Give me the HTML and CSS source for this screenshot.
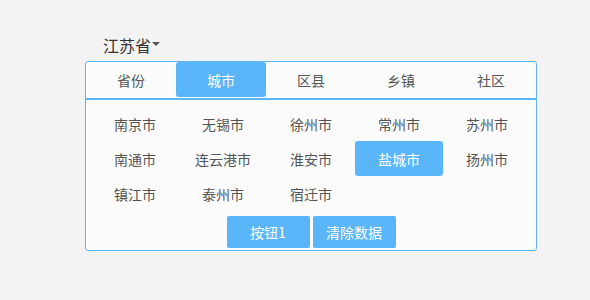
FILE: index.html
```html
<!DOCTYPE html>
<html lang="zh-CN">
<head>
<meta charset="utf-8">
<title>地区选择</title>
<link rel="stylesheet" href="styles.css">
</head>
<body>
<div class="wrap">
  <div class="picker-head"><span class="picker-label">江苏省</span><span class="caret"></span></div>
  <div class="panel">
    <div class="tabs">
      <div class="tab">省份</div>
      <div class="tab active">城市</div>
      <div class="tab">区县</div>
      <div class="tab">乡镇</div>
      <div class="tab">社区</div>
    </div>
    <div class="grid">
      <div class="item">南京市</div>
      <div class="item">无锡市</div>
      <div class="item">徐州市</div>
      <div class="item">常州市</div>
      <div class="item">苏州市</div>
      <div class="item">南通市</div>
      <div class="item">连云港市</div>
      <div class="item">淮安市</div>
      <div class="item active">盐城市</div>
      <div class="item">扬州市</div>
      <div class="item">镇江市</div>
      <div class="item">泰州市</div>
      <div class="item">宿迁市</div>
    </div>
    <div class="actions">
      <button class="btn">按钮1</button>
      <button class="btn">清除数据</button>
    </div>
  </div>
</div>
</body>
</html>
```
FILE: styles.css
```css
* { box-sizing: border-box; }
html, body { margin: 0; padding: 0; }
body {
  background: #f3f3f3;
  font-family: "Noto Sans CJK SC", "Noto Sans", sans-serif;
  width: 590px;
  height: 300px;
}
.wrap {
  padding: 34px 0 0 85px;
}
.picker-head {
  display: flex;
  align-items: center;
  height: 22px;
  margin-bottom: 5px;
  padding-left: 18px;
  color: #333;
  font-size: 16px;
  line-height: 22px;
}
.caret {
  width: 0;
  height: 0;
  border-left: 4px solid transparent;
  border-right: 4px solid transparent;
  border-top: 4px solid #555;
  margin-left: 1px;
  margin-top: -2px;
}
.panel {
  width: 452px;
  background: #fcfcfc;
  border: 1px solid #5cb4f6;
  border-radius: 3px;
}
.tabs {
  display: grid;
  grid-template-columns: repeat(5, 90px);
  border-bottom: 2px solid #5ab5f9;
}
.tab {
  height: 36px;
  display: flex;
  align-items: center;
  justify-content: center;
  font-size: 14px;
  color: #555;
}
.tab.active {
  background: #5ab5f9;
  color: #fff;
  border-radius: 3px;
  height: 35px;
}
.grid {
  display: grid;
  grid-template-columns: repeat(5, 88px);
  grid-auto-rows: 35px;
  padding: 6px 5px 0;
}
.item {
  display: flex;
  align-items: center;
  justify-content: center;
  font-size: 14px;
  color: #555;
}
.item.active {
  background: #5ab5f9;
  color: #fff;
  border-radius: 3px;
}
.actions {
  display: flex;
  justify-content: center;
  gap: 3px;
  padding: 5px 0 2px;
}
.btn {
  width: 83px;
  height: 32px;
  border: none;
  border-radius: 2px;
  background: #5ab5f9;
  color: #fff;
  font-family: "Noto Sans CJK SC", "Noto Sans", sans-serif;
  font-size: 14px;
  padding: 0;
}
```
